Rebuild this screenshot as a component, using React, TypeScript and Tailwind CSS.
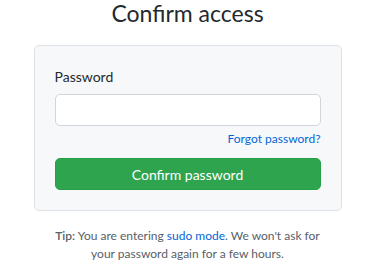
import React from "react";

export default function App() {
  return (
    <div className="min-h-[275px] bg-white text-[#24292e]" style={{ fontFamily: 'Lato, "Noto Sans", Arial, sans-serif' }}>
      <h1 className="pt-0 text-center text-[23px] leading-[27px] font-normal">Confirm access</h1>

      {/* Auth card */}
      <div className="mx-auto mt-[18px] w-[308px] rounded-[5px] border border-[#dde1e5] bg-[#f6f8fa] p-5">
        <label className="block text-[14px] leading-[21px]">Password</label>
        <input
          type="password"
          className="mt-[7px] block h-[32px] w-full rounded-[5px] border border-[#d1d5da] bg-white px-2 outline-none"
        />
        <div className="mt-[4px] text-right text-[12px] leading-[18px]">
          <a href="#" className="text-[#0366d6]">Forgot password?</a>
        </div>
        <button className="mt-[10px] h-[32px] w-full rounded-[5px] border border-[#28a048] bg-[#2ea44f] text-[14px] text-white">
          Confirm password
        </button>
      </div>

      <p className="mx-auto mt-[16px] w-[290px] text-center text-[12px] leading-[18px] text-[#586069]">
        <strong className="font-semibold">Tip:</strong> You are entering{" "}
        <a href="#" className="text-[#0366d6]">sudo mode</a>. We won't ask for your password again for a few hours.
      </p>
    </div>
  );
}
